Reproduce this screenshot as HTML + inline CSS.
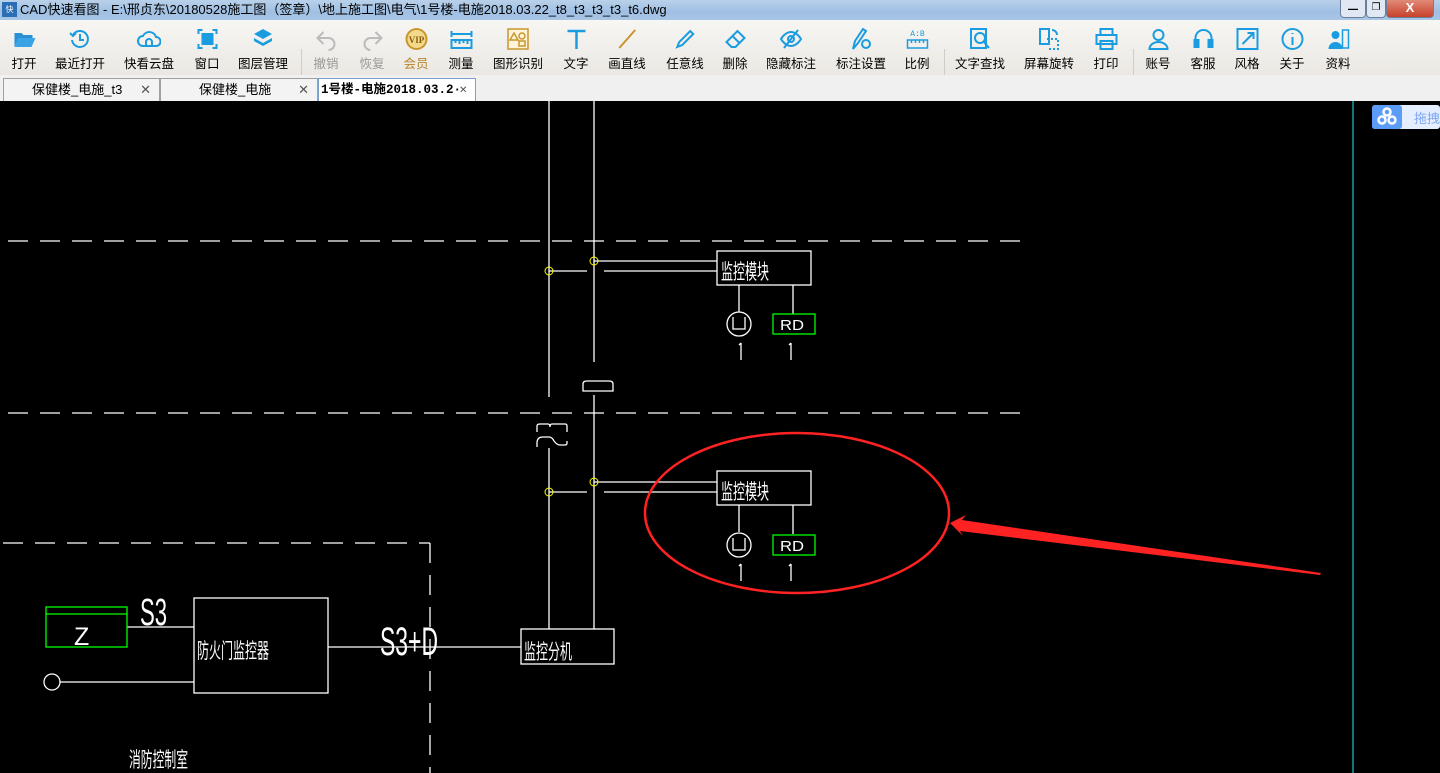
<!DOCTYPE html>
<html><head><meta charset="utf-8"><style>
*{margin:0;padding:0;box-sizing:border-box}
body{width:1440px;height:773px;overflow:hidden;background:#000;font-family:"Liberation Sans","Noto Sans CJK SC",sans-serif;position:relative}
#title{position:absolute;left:0;top:0;width:1440px;height:20px;background:linear-gradient(#b9d1ea,#9fbfe3 60%,#a8c6e6);font-size:13px;color:#000;line-height:20px;padding-left:20px}
#title .ic{position:absolute;left:2px;top:2px;width:15px;height:15px;background:#2a6fb5;color:#fff;font-size:8px;line-height:15px;text-align:center}
.wb{position:absolute;top:0;height:18px;border:1px solid #6b7f99;border-top:none;border-radius:0 0 4px 4px}
#tb{position:absolute;left:0;top:20px;width:1440px;height:55px;background:linear-gradient(#f7f6f3,#ebe8e3)}
.it{position:absolute;top:0;height:55px;text-align:center;font-size:12.5px;color:#000;transform:translateX(-50%);white-space:nowrap}
.it svg{display:block;margin:7px auto 2px;width:24px;height:24px}
.it.g{color:#999}.it.v{color:#b8862b}
.sep{position:absolute;top:29px;width:1px;height:40px;background:#d0ccc6}
#tabs{position:absolute;left:0;top:75px;width:1440px;height:26px;background:#f0f0f0}
.tab{position:absolute;top:3px;height:23px;border:1px solid #a0a0a0;border-bottom:none;background:#f3f3f3;font-size:13px;line-height:22px;padding-left:40px}
.tab .x{position:absolute;right:8px;top:0;color:#555}
</style></head><body>
<div id="title"><div class="ic">快图</div>CAD快速看图 - E:\邢贞东\20180528施工图（签章）\地上施工图\电气\1号楼-电施2018.03.22_t8_t3_t3_t3_t6.dwg
<div class="wb" style="left:1340px;width:26px;background:#dfe8f3;text-align:center;line-height:14px;font-size:10px">▁</div>
<div class="wb" style="left:1366px;width:20px;background:#dfe8f3;text-align:center;line-height:16px;font-size:10px">❐</div>
<div class="wb" style="left:1386px;width:48px;background:linear-gradient(#e08a78,#c7412a);color:#fff;font-weight:bold;text-align:center;line-height:16px">X</div>
</div>
<div id="tb">
<div class="it" style="left:24px"><svg viewBox="0 0 24 24"><path d="M2 6h7l2 2h9v3H6l-4 9z" fill="#2b8fd6"/><path d="M6 11h17l-4 9H2z" fill="#3aa3e6"/></svg>打开</div>
<div class="it" style="left:80px"><svg viewBox="0 0 24 24" fill="none" stroke="#1a9ce0" stroke-width="2"><path d="M5 8a8 8 0 1 1-1 5"/><path d="M12 7v6h4"/><path d="M2 6l3 3 3-3"/></svg>最近打开</div>
<div class="it" style="left:149px"><svg viewBox="0 0 24 24" fill="none" stroke="#1a9ce0" stroke-width="2"><path d="M6 19a5 5 0 0 1 0-10 7 7 0 0 1 13 1 4.5 4.5 0 0 1 0 9z"/><path d="M9 19v-4a3 3 0 0 1 6 0v4"/></svg>快看云盘</div>
<div class="it" style="left:207px"><svg viewBox="0 0 24 24" fill="none" stroke="#1a9ce0" stroke-width="2"><path d="M3 7V3h4M17 3h4v4M21 17v4h-4M7 21H3v-4"/><rect x="7" y="7" width="10" height="10" fill="#1a9ce0"/></svg>窗口</div>
<div class="it" style="left:263px"><svg viewBox="0 0 24 24" fill="#1a9ce0"><path d="M12 2l9 5-9 5-9-5z"/><path d="M3 11l9 5 9-5v3l-9 5-9-5z"/></svg>图层管理</div>
<div class="sep" style="left:301px"></div>
<div class="it g" style="left:326px"><svg viewBox="0 0 24 24" fill="none" stroke="#bbb" stroke-width="2"><path d="M9 5L3 11l6 6M3 11h11a6 6 0 0 1 0 12"/></svg>撤销</div>
<div class="it g" style="left:372px"><svg viewBox="0 0 24 24" fill="none" stroke="#bbb" stroke-width="2"><path d="M15 5l6 6-6 6M21 11H10a6 6 0 0 0 0 12"/></svg>恢复</div>
<div class="it v" style="left:416px"><svg viewBox="0 0 24 24"><circle cx="12" cy="12" r="11" fill="#c8962f"/><circle cx="12" cy="12" r="9" fill="#f3d98a"/><text x="12" y="16" font-size="9" font-weight="bold" text-anchor="middle" fill="#8a5a10" font-family="Liberation Serif">VIP</text></svg>会员</div>
<div class="it" style="left:461px"><svg viewBox="0 0 24 24" fill="none" stroke="#1a9ce0" stroke-width="2"><path d="M2 4v6M22 4v6M3 7h18"/><rect x="2" y="13" width="20" height="8"/><path d="M6 13v3M10 13v4M14 13v3M18 13v4"/></svg>测量</div>
<div class="it" style="left:518px"><svg viewBox="0 0 24 24" fill="none" stroke="#c8962f" stroke-width="1.5"><rect x="2" y="2" width="20" height="20" fill="#fff3d8"/><path d="M8 6l4 7H4z"/><circle cx="16" cy="9" r="3"/><rect x="13" y="14" width="6" height="5"/></svg>图形识别</div>
<div class="it" style="left:576px"><svg viewBox="0 0 24 24" fill="none" stroke="#1a9ce0" stroke-width="2.5"><path d="M3 4h18M12 4v18"/></svg>文字</div>
<div class="it" style="left:627px"><svg viewBox="0 0 24 24" fill="none" stroke="#c8962f" stroke-width="2"><path d="M4 21L20 3"/></svg>画直线</div>
<div class="it" style="left:685px"><svg viewBox="0 0 24 24" fill="none" stroke="#1a9ce0" stroke-width="2"><path d="M4 20l2-5L17 4l3 3L9 18z"/></svg>任意线</div>
<div class="it" style="left:735px"><svg viewBox="0 0 24 24" fill="none" stroke="#1a9ce0" stroke-width="2"><path d="M8 20l-5-5L14 4l7 7-9 9zM9 9l7 7"/></svg>删除</div>
<div class="it" style="left:791px"><svg viewBox="0 0 24 24" fill="none" stroke="#1a9ce0" stroke-width="2"><path d="M2 12s4-7 10-7 10 7 10 7-4 7-10 7S2 12 2 12z"/><circle cx="12" cy="12" r="3"/><path d="M19 3L5 21"/></svg>隐藏标注</div>
<div class="it" style="left:861px"><svg viewBox="0 0 24 24" fill="none" stroke="#1a9ce0" stroke-width="2"><path d="M4 22l2-8 8-12 3 2-8 12z"/><circle cx="17" cy="17" r="4"/></svg>标注设置</div>
<div class="it" style="left:917px"><svg viewBox="0 0 24 24" fill="none" stroke="#1a9ce0" stroke-width="1.5"><text x="12" y="9" font-size="8" text-anchor="middle" fill="#1a9ce0" stroke="none" font-family="Liberation Mono">A:B</text><rect x="2" y="13" width="20" height="8"/><path d="M6 13v3M10 13v3M14 13v3M18 13v3"/></svg>比例</div>
<div class="sep" style="left:944px"></div>
<div class="it" style="left:980px"><svg viewBox="0 0 24 24" fill="none" stroke="#1a9ce0" stroke-width="2"><rect x="3" y="2" width="15" height="19"/><circle cx="12" cy="11" r="5"/><path d="M16 15l5 6"/></svg>文字查找</div>
<div class="it" style="left:1049px"><svg viewBox="0 0 24 24" fill="none" stroke="#1a9ce0" stroke-width="2"><rect x="3" y="2" width="9" height="15"/><path d="M10 12h11v10H10" stroke-dasharray="2 2"/><path d="M15 3a5 5 0 0 1 5 5"/></svg>屏幕旋转</div>
<div class="it" style="left:1106px"><svg viewBox="0 0 24 24" fill="none" stroke="#1a9ce0" stroke-width="2"><rect x="6" y="2" width="12" height="6"/><rect x="2" y="8" width="20" height="9"/><rect x="6" y="14" width="12" height="8"/></svg>打印</div>
<div class="sep" style="left:1133px"></div>
<div class="it" style="left:1158px"><svg viewBox="0 0 24 24" fill="none" stroke="#1a9ce0" stroke-width="2"><circle cx="12" cy="8" r="5"/><path d="M3 22a9 7 0 0 1 18 0z"/></svg>账号</div>
<div class="it" style="left:1203px"><svg viewBox="0 0 24 24" fill="none" stroke="#1a9ce0" stroke-width="2"><path d="M4 15v-4a8 8 0 0 1 16 0v4"/><rect x="3" y="13" width="4" height="7" fill="#1a9ce0"/><rect x="17" y="13" width="4" height="7" fill="#1a9ce0"/></svg>客服</div>
<div class="it" style="left:1247px"><svg viewBox="0 0 24 24" fill="none" stroke="#1a9ce0" stroke-width="2"><rect x="2" y="2" width="20" height="20"/><path d="M7 17L18 6M12 6h6v6"/></svg>风格</div>
<div class="it" style="left:1292px"><svg viewBox="0 0 24 24" fill="none" stroke="#1a9ce0" stroke-width="2"><circle cx="12" cy="12" r="10"/><path d="M12 10v8M12 6v1"/></svg>关于</div>
<div class="it" style="left:1338px"><svg viewBox="0 0 24 24" fill="#1a9ce0"><circle cx="9" cy="8" r="4"/><path d="M2 22a7 7 0 0 1 14 0z"/><rect x="16" y="3" width="6" height="18" fill="none" stroke="#1a9ce0" stroke-width="1.5"/></svg>资料</div>
</div>
<div id="tabs">
<div class="tab" style="left:3px;width:157px;padding-left:28px">保健楼_电施_t3<span class="x">✕</span></div>
<div class="tab" style="left:160px;width:158px;padding-left:38px">保健楼_电施<span class="x">✕</span></div>
<div class="tab" style="left:318px;width:158px;background:#fff;border-color:#7aa0d0;padding-left:2px;font-family:'Liberation Mono','Noto Sans CJK SC',monospace;font-weight:bold;font-size:12.5px">1号楼-电施2018.03.2·<span class="x">✕</span></div>
</div>
<svg style="position:absolute;left:0;top:0" width="1440" height="773" font-family="'Noto Sans CJK SC',sans-serif">
<g stroke="#fff" stroke-width="1.3" fill="none">
<path d="M8 241H1030M8 413H1030" stroke-dasharray="20 12"/>
<path d="M3 543H430" stroke-dasharray="20 12"/>
<path d="M430 543V773" stroke-dasharray="20 12"/>
<path d="M549 101V397M549 448V629M594 101V362M594 395V629"/>
<path d="M583 391v-7q0-3 4-3h22q4 0 4 3v7z"/>
<path d="M537 432v-6q0-2 3-2h8q2 0 2 3q0-3 2-3h13q2 0 2 2v6M537 447v-4q0-6 6-6h6q3 0 5 4q3 4 6 4h5q2 0 2-2v-2"/>
<path d="M594 261H717M549 271H587M604 271H717"/>
<path d="M594 482H717M549 492H587M604 492H717"/>
<rect x="717" y="251" width="94" height="34"/><rect x="717" y="471" width="94" height="34"/>
<path d="M739 285V312M793 285V314M739 505V532M793 505V534"/>
<circle cx="739" cy="324" r="12"/><path d="M733 317v12h12v-12"/>
<circle cx="739" cy="545" r="12"/><path d="M733 538v12h12v-12"/>
<path d="M741 343v17M791 343v17M741 564v17M791 564v17M739 345l2-2M789 345l2-2M739 566l2-2M789 566l2-2"/>
<path d="M127 627H194M60 682H194M328 647H521"/>
<circle cx="52" cy="682" r="8"/>
<rect x="194" y="598" width="134" height="95"/>
<rect x="521" y="629" width="93" height="35"/>
</g>
<g stroke="#ff0" stroke-width="1" fill="none"><circle cx="549" cy="271" r="4"/><circle cx="594" cy="261" r="4"/><circle cx="549" cy="492" r="4"/><circle cx="594" cy="482" r="4"/></g>
<g stroke="#0f0" stroke-width="1.3" fill="none"><rect x="773" y="314" width="42" height="20"/><rect x="773" y="535" width="42" height="20"/><rect x="46" y="607" width="81" height="40"/><path d="M46 614H127"/></g>
<g fill="#fff" font-size="21">
<text x="721" y="279" textLength="48" lengthAdjust="spacingAndGlyphs">监控模块</text>
<text x="721" y="499" textLength="48" lengthAdjust="spacingAndGlyphs">监控模块</text>
<text x="197" y="658" textLength="72" lengthAdjust="spacingAndGlyphs">防火门监控器</text>
<text x="524" y="659" textLength="48" lengthAdjust="spacingAndGlyphs">监控分机</text>
<text x="129" y="767" textLength="59" lengthAdjust="spacingAndGlyphs">消防控制室</text>
</g>
<g fill="#fff" font-family="'Liberation Sans',sans-serif">
<text x="780" y="330" font-size="15" textLength="24" lengthAdjust="spacingAndGlyphs">RD</text>
<text x="780" y="551" font-size="15" textLength="24" lengthAdjust="spacingAndGlyphs">RD</text>
<text x="74" y="645" font-size="25">Z</text>
<text x="140" y="625" font-size="38" textLength="27" lengthAdjust="spacingAndGlyphs">S3</text>
<text x="380" y="655" font-size="40" textLength="58" lengthAdjust="spacingAndGlyphs">S3+D</text>
</g>
<ellipse cx="797" cy="513" rx="152" ry="80" fill="none" stroke="#f22" stroke-width="2.5"/>
<polygon points="950,523 966,515 962,520 1321,573 1320,575 960,531 963,536" fill="#f22"/>
<path d="M1353 101V773" stroke="#2ee" stroke-width="1"/>
<rect x="1372" y="105" width="68" height="24" rx="3" fill="#e5eeff"/>
<rect x="1372" y="105" width="30" height="24" rx="3" fill="#5b9cf8"/>
<g fill="none" stroke="#fff" stroke-width="2.5"><circle cx="1387" cy="112" r="3.5"/><circle cx="1382" cy="120" r="3.5"/><circle cx="1392" cy="120" r="3.5"/></g>
<text x="1414" y="123" font-size="13" fill="#7ea6f0">拖拽</text>
</svg>
</body></html>
